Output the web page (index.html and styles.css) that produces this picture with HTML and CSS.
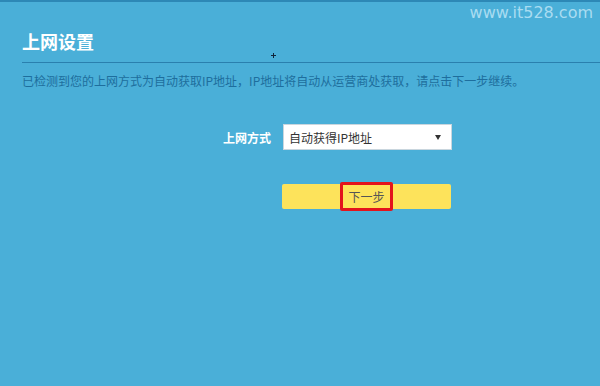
FILE: index.html
```html
<!DOCTYPE html>
<html lang="zh-CN">
<head>
    <meta charset="UTF-8">
    <meta name="viewport" content="width=device-width, initial-scale=1.0">
    <link rel="stylesheet" href="styles.css">
</head>
<body>
    <div class="page">
        <div class="watermark">www.it528.com</div>
        <h1 class="title">上网设置</h1>
        <span class="cursor"></span>
        <p class="desc">已检测到您的上网方式为自动获取IP地址，IP地址将自动从运营商处获取，请点击下一步继续。</p>
        <div class="field">
            <label class="field-label">上网方式</label>
            <div class="select">
                <span>自动获得IP地址</span>
                <i class="arrow"></i>
            </div>
        </div>
        <div class="actions">
            <button class="next-btn"><span class="mark">下一步</span></button>
        </div>
    </div>
</body>
</html>
```

FILE: styles.css
```css
body {
    margin: 0;
    padding: 0;
    background-color: #4aafd8;
    font-family: "Microsoft YaHei", "Noto Sans CJK SC", "Noto Sans", sans-serif;
}

.page {
    position: relative;
    height: 384px;
    border-top: 2px solid #2d88b6;
}

.watermark {
    position: absolute;
    top: 1px;
    right: 7px;
    font-family: "DejaVu Sans", Verdana, sans-serif;
    font-size: 16px;
    color: #a9dcf1;
}

.title {
    margin: 0 0 0 22px;
    padding: 29px 0 11px;
    font-size: 18px;
    line-height: 20px;
    font-weight: bold;
    color: #ffffff;
    border-bottom: 1px solid #2a80ae;
}

.cursor {
    position: absolute;
    left: 271px;
    top: 51px;
    width: 5px;
    height: 5px;
    background:
        linear-gradient(#10243a, #10243a) center / 5px 1px no-repeat,
        linear-gradient(#10243a, #10243a) center / 1px 5px no-repeat;
}

.desc {
    margin: 8px 0 0 22px;
    font-size: 12px;
    line-height: 20px;
    color: #1e6e9d;
}

.field {
    display: flex;
    align-items: center;
    margin-top: 33px;
    padding-left: 200px;
}

.field-label {
    width: 71px;
    text-align: right;
    font-size: 12px;
    font-weight: bold;
    color: #ffffff;
    margin-right: 12px;
}

.select {
    box-sizing: border-box;
    display: flex;
    align-items: center;
    justify-content: space-between;
    width: 169px;
    height: 26px;
    padding: 0 10px 0 5px;
    background-color: #ffffff;
    border: 1px solid #c9d6de;
    font-size: 12px;
    color: #333333;
}

.arrow {
    width: 0;
    height: 0;
    border-left: 3px solid transparent;
    border-right: 3px solid transparent;
    border-top: 5px solid #333333;
}

.actions {
    margin-top: 34px;
    padding-left: 282px;
}

.next-btn {
    display: flex;
    align-items: center;
    justify-content: center;
    width: 169px;
    height: 25px;
    padding: 0;
    background-color: #fde35b;
    border: none;
    border-radius: 2px;
    font-family: inherit;
    font-size: 12px;
    color: #555555;
}

.mark {
    box-sizing: border-box;
    display: flex;
    align-items: center;
    justify-content: center;
    width: 53px;
    height: 29px;
    margin-top: -1px;
    border: 3px solid #e3141c;
    border-radius: 2px;
}
```
